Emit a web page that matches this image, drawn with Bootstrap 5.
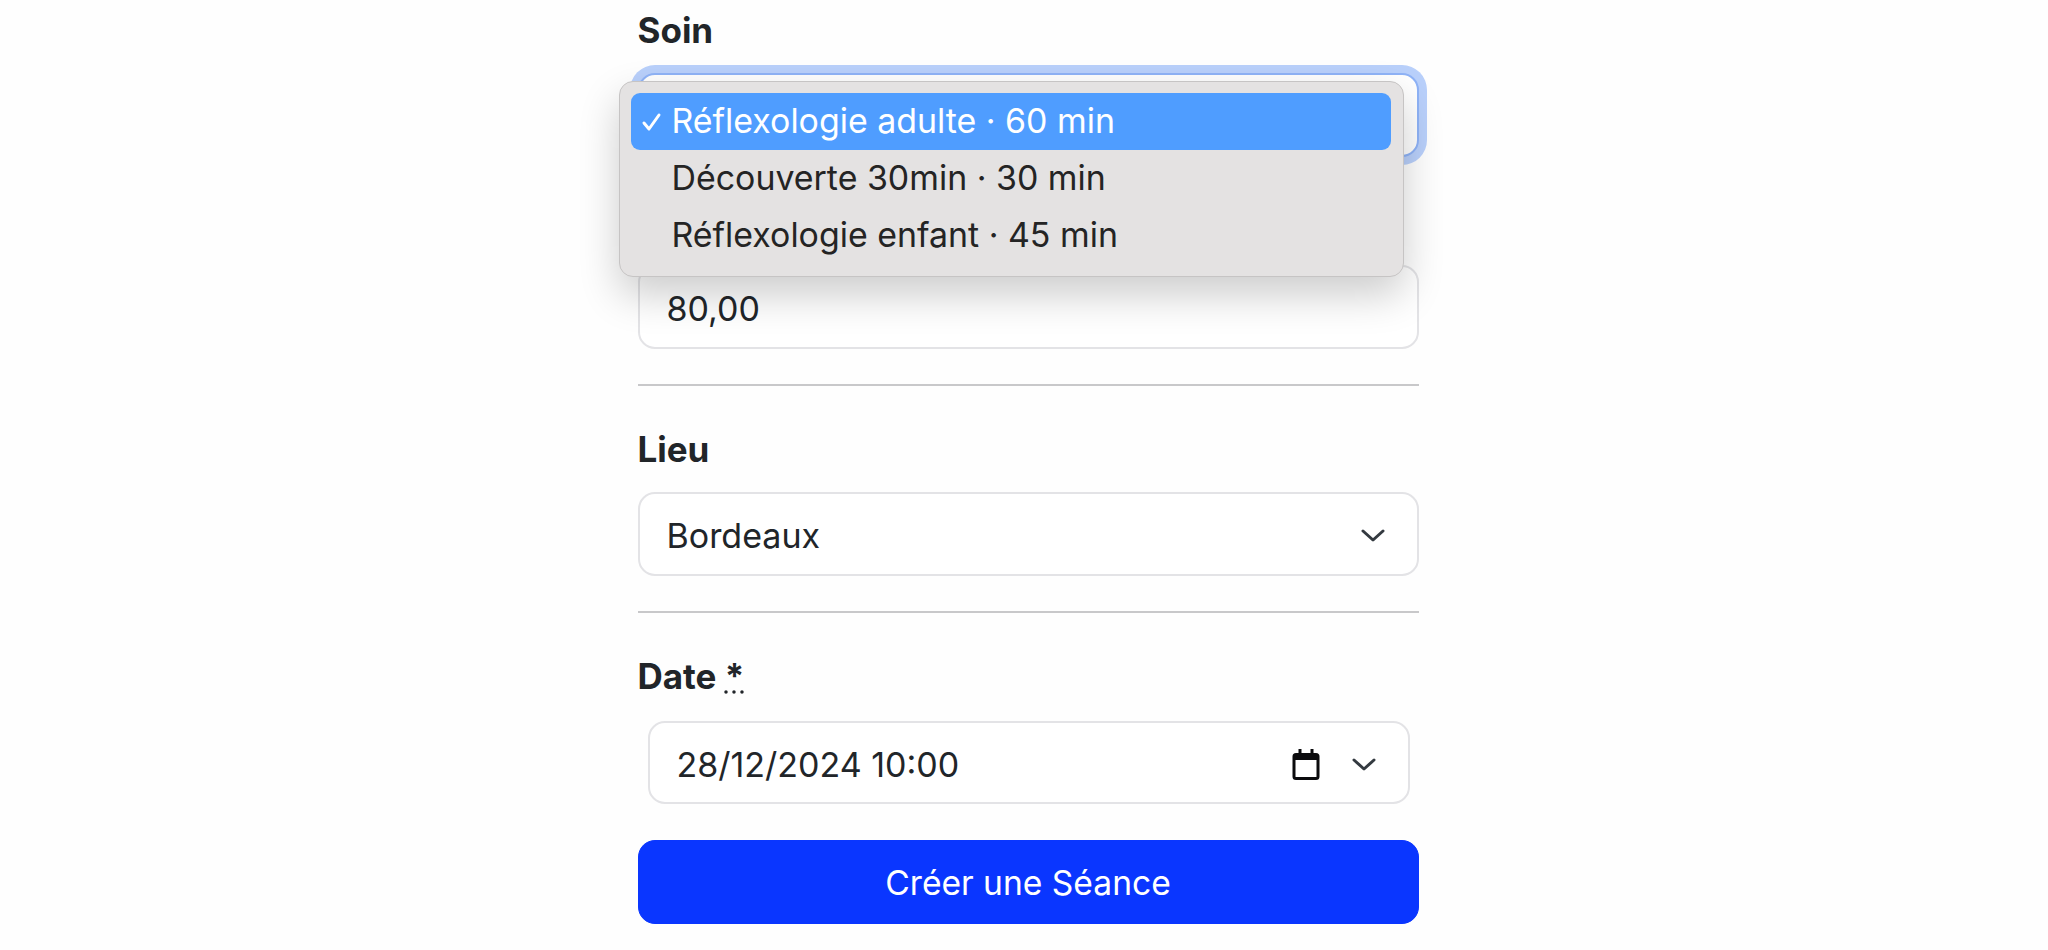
<!DOCTYPE html>
<html lang="fr">
<head>
<meta charset="utf-8">
<title>Créer une Séance</title>
<link href="https://cdn.jsdelivr.net/npm/bootstrap@5.3.0/dist/css/bootstrap.min.css" rel="stylesheet">
<style>
body{background:#fefefe;color:#212529;font-family:Inter,"Liberation Sans",sans-serif;font-size:34px;height:950px;overflow:hidden;padding-left:8px}
.sheet{width:781px;margin:0 auto;padding-top:6px}
.fld-label{display:block;font-weight:700;font-size:35px;line-height:48px;margin-bottom:19px;color:#212529}
.fld-box{height:84px;font-size:34px;line-height:1.5;padding:3px 32px 0 27px;border:2px solid #e3e3e6;border-radius:17px;background:#fff;color:#212529;display:flex;align-items:center;justify-content:space-between}
.fld-ring{border-color:#8fb3f7;box-shadow:0 0 0 8px #b9d0fb}
.fld-wrap{position:relative;height:84px;margin-bottom:24px}
.ghost-label{height:84px}
.sep{margin:35px 0 39px;border:0;border-top:2px solid #c8c8ca;opacity:1}
.date-box{margin:21px 9px 36px 10px;height:83px}
.chev{width:24px;height:13px;fill:none;stroke:#343a40;stroke-width:3;stroke-linecap:round;stroke-linejoin:round}
.cal{width:28px;height:31px;margin-right:32px}
.submit-btn{height:84px;font-size:33.6px;padding-top:9px;border-radius:17px;background:#0a36ff;border-color:#0a36ff}
.popup{position:absolute;left:-19px;top:8px;width:785px;height:196px;background:#e4e2e2;border:1px solid #c6c4c4;border-radius:14px;padding:11px;box-shadow:0 18px 40px rgba(0,0,0,.2);z-index:5;font-size:33.9px}
.popup-row{height:57px;display:flex;align-items:center;border-radius:9px;padding-left:10px;width:760px;color:#242424}
.popup-row.is-on{background:#4f9dff;color:#fff}
.tick{width:22px;height:20px;fill:none;stroke:#fff;stroke-width:3;stroke-linecap:round;stroke-linejoin:round;flex:none}
.tick-slot{width:31px;flex:none;display:flex}
</style>
</head>
<body>
<form class="sheet">
  <label class="fld-label">Soin</label>
  <div class="fld-wrap">
    <div class="fld-box fld-ring"></div>
    <div class="popup">
      <div class="popup-row is-on"><span class="tick-slot"><svg class="tick" viewBox="0 0 22 20"><path d="M3 11l5 6L18 3"/></svg></span>Réflexologie adulte · 60 min</div>
      <div class="popup-row"><span class="tick-slot"></span>Découverte 30min · 30 min</div>
      <div class="popup-row"><span class="tick-slot"></span>Réflexologie enfant · 45 min</div>
    </div>
  </div>
  <div class="ghost-label"></div>
  <div class="fld-box">80,00</div>
  <hr class="sep">
  <label class="fld-label">Lieu</label>
  <div class="fld-box">Bordeaux<svg class="chev" viewBox="0 0 24 13"><path d="M2 2l10 9L22 2"/></svg></div>
  <hr class="sep">
  <label class="fld-label">Date <abbr title="obligatoire">*</abbr></label>
  <div class="fld-box date-box">
    <span>28/12/2024 10:00</span>
    <span class="d-flex align-items-center">
      <svg class="cal" viewBox="0 0 27 31"><path d="M6 0h3v4h9V0h3v4h2.500A3.500 3.500 0 0 1 27 7.500v20a3.500 3.500 0 0 1-3.500 3.500h-20A3.500 3.500 0 0 1 0 27.500v-20A3.500 3.500 0 0 1 3.500 4H6zM3 11v16.500a.5.5 0 0 0 .5.5h20a.5.500 0 0 0 .5-.5V11z" fill="#0b0b0d" fill-rule="evenodd"/></svg>
      <svg class="chev" viewBox="0 0 24 13"><path d="M2 2l10 9L22 2"/></svg>
    </span>
  </div>
  <button type="button" class="btn btn-primary w-100 submit-btn">Créer une Séance</button>
</form>
<script src="https://cdn.jsdelivr.net/npm/bootstrap@5.3.0/dist/js/bootstrap.bundle.min.js"></script>
</body>
</html>
